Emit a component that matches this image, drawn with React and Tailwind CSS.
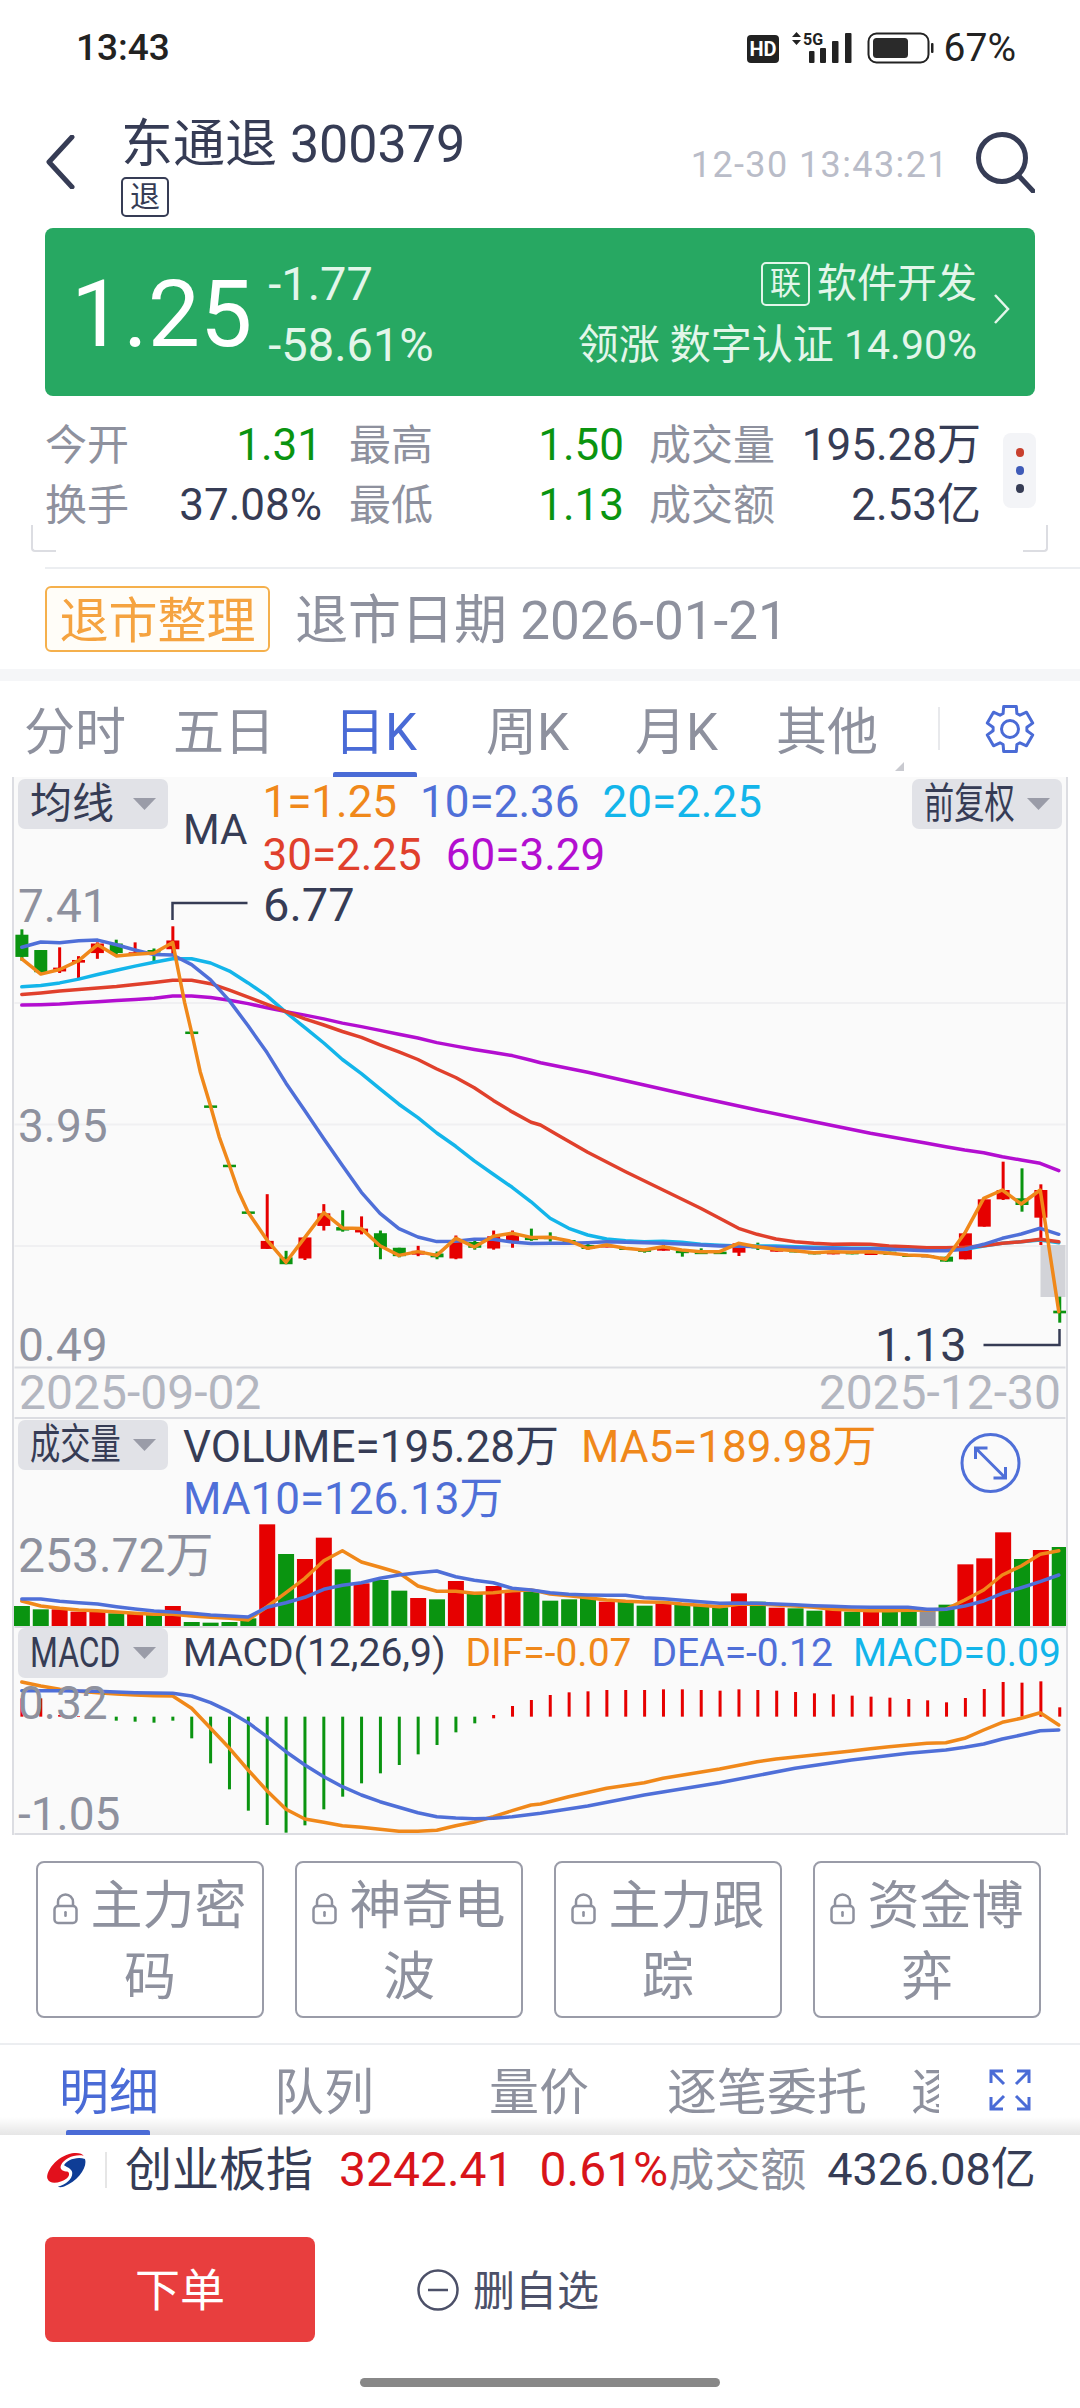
import React from 'react';

const X = (i) => 21.4 + 18.87 * i;
const a = (px, py) => [px / 2.904, 800 + py / 2.613]; // upper-left chart scale
const b = (px, py) => [540 + px / 2.904, 1000 + py / 3]; // right chart scale
const c = (px, py) => [px / 2.904, 1400 + py / 3];
const d = (px, py) => [540 + px / 2.904, 1400 + py / 3];
const pts = (list, fn) => {
  const out = [];
  for (let i = 0; i < list.length; i += 2) out.push(fn(list[i], list[i + 1]));
  return out;
};
const line = (l1, f1, l2, f2) =>
  [...pts(l1, f1), ...(l2 ? pts(l2, f2) : [])].map((p) => p[0].toFixed(1) + ',' + p[1].toFixed(1)).join(' ');

const R = '#e60000';
const G = '#0a9410';
const GR = '#8e919e';

// i, colour, bodyTop, bodyBottom, wickTop, wickBottom
const candlesA = [
  [0, G, 352, 410, 338, 420], [1, G, 392, 450, 392, 455], [2, R, 438, 448, 385, 452], [3, R, 418, 425, 408, 465],
  [4, R, 375, 400, 372, 415], [5, G, 375, 400, 365, 408], [6, R, 398, 403, 372, 405], [7, G, 392, 397, 388, 422],
  [8, R, 367, 390, 330, 405], [9, G, 605, 610, 605, 610], [10, G, 798, 803, 798, 803], [11, G, 953, 958, 953, 958],
  [12, G, 1075, 1080, 1075, 1080], [13, R, 1152, 1173, 1030, 1173], [14, G, 1195, 1213, 1178, 1213], [15, R, 1143, 1198, 1143, 1202],
  [16, R, 1080, 1113, 1056, 1125], [17, G, 1116, 1125, 1072, 1128], [18, R, 1120, 1130, 1088, 1135], [19, G, 1132, 1168, 1125, 1200],
  [20, G, 1170, 1192, 1170, 1195], [21, R, 1178, 1188, 1165, 1192], [22, G, 1185, 1195, 1180, 1200], [23, R, 1150, 1198, 1138, 1200],
  [24, G, 1155, 1170, 1150, 1175], [25, R, 1140, 1172, 1125, 1175], [26, R, 1135, 1155, 1125, 1170], [27, G, 1140, 1150, 1120, 1152],
];
const candlesB = [
  [28, G, 710, 716, 697, 725], [29, G, 720, 724, 720, 724], [30, G, 735, 747, 730, 750], [31, R, 735, 742, 735, 742],
  [32, G, 742, 750, 742, 750], [33, G, 748, 755, 748, 758], [34, R, 740, 752, 733, 752], [35, G, 752, 757, 748, 770],
  [36, G, 755, 760, 745, 762], [37, G, 755, 762, 755, 762], [38, R, 730, 758, 728, 768], [39, G, 735, 745, 728, 750],
  [40, R, 745, 755, 745, 755], [41, G, 750, 757, 750, 757], [42, G, 755, 763, 755, 763], [43, R, 755, 763, 755, 763],
  [44, G, 755, 763, 755, 763], [45, R, 755, 765, 755, 765], [46, G, 755, 765, 755, 765], [47, G, 763, 771, 763, 771],
  [48, GR, 765, 773, 765, 773], [49, G, 770, 785, 770, 785], [50, R, 700, 778, 700, 778], [51, R, 598, 680, 598, 680],
  [52, R, 570, 598, 485, 600], [53, G, 595, 615, 505, 635], [54, R, 570, 653, 553, 735], [55, G, 932, 940, 890, 968],
];

const volTops = [
  [G, 618], [G, 628], [R, 628], [R, 635], [R, 635], [G, 640], [R, 640], [G, 645], [R, 618], [G, 666], [G, 668], [G, 666], [G, 655], [R, 373],
  [G, 462], [R, 477], [R, 413], [G, 508], [R, 550], [G, 540], [G, 572], [R, 594], [G, 598], [R, 543], [G, 580], [R, 558], [R, 570], [G, 575],
  [G, 602], [G, 598], [G, 594], [R, 605], [G, 605], [G, 617], [R, 610], [G, 615], [G, 618], [G, 622], [R, 580], [G, 605], [R, 623], [G, 625],
  [G, 632], [R, 628], [G, 635], [R, 635], [G, 632], [G, 635], [GR, 630], [G, 614], [R, 493], [R, 475], [R, 397], [G, 477], [R, 450], [G, 441],
];

// top/bottom of the MACD histogram, in the zoom scale (zero at 950)
const macdBars = [
  [R, 895, 950], [R, 895, 950], [R, 945, 950], [R, 948, 950], [G, 950, 955], [G, 950, 962], [G, 950, 965], [G, 950, 968], [G, 950, 962],
  [G, 950, 1015], [G, 950, 1090], [G, 950, 1168], [G, 950, 1232], [G, 950, 1275], [G, 950, 1298], [G, 950, 1276], [G, 950, 1228], [G, 950, 1190],
  [G, 950, 1150], [G, 950, 1120], [G, 950, 1095], [G, 950, 1063], [G, 950, 1035], [G, 950, 997], [G, 950, 970], [R, 945, 955], [R, 918, 950], [R, 900, 950],
  ...[885, 877, 874, 870, 870, 870, 868, 868, 870, 872, 868, 870, 872, 876, 880, 883, 887, 890, 893, 897, 901, 907, 894, 867, 846, 848, 844, 922].map((t) => [R, t, 950]),
];

const ma1 = line(
  [62,415,117,455,172,443,227,420,282,378,337,408,391,403,446,400,500,372,515,440,535,530,555,607,580,710,610,800,635,880,665,955,690,1020,719,1077,774,1150,829,1208,884,1143,939,1078,993,1118,1048,1120,1102,1165,1157,1190,1212,1180,1267,1190,1322,1145,1376,1168,1431,1140,1486,1132,1541,1143], a,
  [28,712,82,722,137,745,192,735,247,745,301,750,356,740,410,750,465,755,520,755,575,730,629,740,684,748,739,752,794,758,848,755,903,757,958,755,1012,760,1067,765,1122,767,1177,778,1232,700,1287,595,1341,570,1396,612,1451,570,1505,935], b);
const ma10 = line(
  [62,385,117,371,172,373,227,368,282,366,337,378,391,392,446,404,500,405,555,430,610,470,665,525,719,590,774,660,829,740,884,812,939,885,993,955,1048,1025,1102,1080,1157,1120,1212,1142,1267,1154,1322,1153,1376,1148,1431,1148,1486,1155,1541,1159], a,
  [28,730,82,730,137,728,192,725,247,727,301,728,356,730,410,732,465,735,520,738,575,738,629,740,684,742,739,743,794,745,848,745,903,746,958,746,1012,748,1067,750,1122,752,1177,752,1232,748,1287,733,1341,715,1396,702,1451,685,1505,703], b);
const ma20 = line(
  [62,488,117,485,172,478,227,468,282,456,337,445,391,434,446,424,500,415,555,415,610,426,665,447,719,478,774,512,829,555,884,595,939,635,993,678,1048,715,1102,755,1157,795,1212,830,1267,870,1322,905,1376,943,1431,978,1486,1012,1541,1050], a,
  [0,630,28,655,82,685,137,705,192,717,247,722,301,725,356,724,410,727,465,733,520,736,575,738,629,738,684,738,739,740,794,742,848,743,903,745,958,745,1012,745,1067,745,1122,745,1177,748,1232,748,1287,738,1341,730,1396,725,1451,720,1505,728], b);
const ma30 = line(
  [62,508,117,504,172,499,227,495,282,491,337,487,391,482,446,477,500,471,555,471,610,480,665,497,719,515,774,534,829,553,884,572,939,588,993,605,1048,620,1102,640,1157,658,1212,678,1267,703,1322,725,1376,752,1431,785,1486,815,1541,842], a,
  [0,375,55,408,137,457,247,515,356,570,465,625,520,655,575,685,629,703,684,717,739,725,794,730,848,733,903,732,958,733,1012,738,1067,740,1122,743,1177,743,1232,742,1287,737,1341,730,1396,725,1451,718,1505,725], b);
const ma60 = line(
  [62,536,117,535,172,533,227,530,282,527,337,524,391,521,446,518,500,512,555,512,610,516,665,523,719,532,774,543,829,553,884,562,939,572,993,583,1048,592,1102,602,1157,612,1212,622,1267,634,1322,643,1376,652,1431,660,1486,668,1541,680], a,
  [0,188,137,217,301,255,465,293,629,330,794,365,958,400,1122,430,1177,440,1232,450,1287,458,1341,470,1396,480,1451,490,1505,512], b);

const volMa5 = line(
  [62,603,117,618,172,625,227,630,282,632,337,636,391,640,446,643,500,643,555,648,610,652,665,655,719,660,774,620,829,578,884,535,939,482,993,452,1048,486,1102,502,1157,518,1212,558,1267,574,1322,574,1376,580,1431,578,1486,572,1541,570], c,
  [0,575,28,582,82,587,137,593,192,600,247,604,301,606,356,607,410,612,465,616,520,620,575,613,629,612,684,615,739,618,794,622,848,628,903,630,958,632,1012,632,1067,631,1122,630,1177,628,1232,600,1287,570,1341,525,1396,498,1451,463,1505,452], d);
const volMa10 = line(
  [62,597,117,597,172,604,227,608,282,612,337,620,391,627,446,633,500,636,555,640,610,645,665,648,719,651,774,622,829,608,884,592,939,568,993,556,1048,548,1102,535,1157,525,1212,518,1267,513,1322,530,1376,541,1431,548,1486,565,1541,570], c,
  [28,578,82,583,137,585,192,586,247,586,301,593,356,596,410,601,465,605,520,610,575,609,629,610,684,612,739,614,794,617,848,619,903,621,958,622,1012,622,1067,622,1122,628,1177,628,1232,618,1287,603,1341,580,1396,563,1451,545,1505,525], d);
const dif = line(
  [62,846,117,858,172,868,227,874,282,878,337,882,391,885,446,887,500,888,555,925,610,985,665,1045,719,1110,774,1172,829,1228,884,1257,939,1267,993,1277,1048,1282,1102,1288,1157,1294,1212,1294,1267,1291,1322,1277,1376,1266,1431,1250,1486,1232,1541,1215], c,
  [0,1212,82,1190,192,1165,301,1148,356,1135,520,1107,629,1085,684,1077,794,1065,903,1053,958,1046,1012,1040,1122,1030,1177,1028,1232,1015,1287,990,1341,967,1396,955,1451,938,1505,975], d);
const dea = line(
  [62,872,172,872,282,874,391,878,500,880,555,888,610,908,665,935,719,968,774,1010,829,1055,884,1095,939,1130,993,1160,1048,1185,1102,1205,1157,1222,1212,1238,1267,1250,1322,1254,1376,1256,1431,1255,1486,1250], c,
  [0,1240,137,1218,301,1185,520,1148,739,1105,903,1080,1067,1060,1177,1050,1232,1042,1287,1032,1341,1017,1396,1005,1451,992,1505,990], d);

const Candle = ({ data, map }) => {
  const [i, col, t, bt, wt, wb] = data;
  const x = X(i);
  const by1 = map(0, t)[1];
  const by2 = map(0, bt)[1];
  const wy1 = map(0, wt)[1];
  const wy2 = map(0, wb)[1];
  return (
    <g fill={col}>
      <rect x={x - 1.5} y={wy1} width="3" height={wy2 - wy1} />
      <rect x={x - 6.5} y={by1} width="13" height={Math.max(by2 - by1, 2.5)} />
    </g>
  );
};

const Poly = ({ p, color, w = 3.5 }) => (
  <polyline points={p} fill="none" stroke={color} strokeWidth={w} strokeLinejoin="round" strokeLinecap="round" />
);

const ChartDrawing = () => (
  <svg viewBox="14 777 1051 1058" className="absolute inset-0 w-full h-full">
    {[1003, 1124.5, 1246].map((y) => (
      <line key={y} x1="14" x2="1065" y1={y} y2={y} stroke="#f0f0f2" strokeWidth="2" />
    ))}
    {[1367.5, 1418, 1627, 1834].map((y) => (
      <line key={y} x1="14" x2="1065" y1={y} y2={y} stroke="#dcdde2" strokeWidth="2" />
    ))}
    <rect x="1040" y="1245" width="25" height="52" fill="#d2d3d8" />
    {candlesA.map((k) => <Candle key={k[0]} data={k} map={a} />)}
    {candlesB.map((k) => <Candle key={k[0]} data={k} map={b} />)}
    <Poly p={ma60} color="#b30ed0" />
    <Poly p={ma20} color="#13b5ea" />
    <Poly p={ma30} color="#e0402c" />
    <Poly p={ma10} color="#4f6fd8" />
    <Poly p={ma1} color="#f0881a" />
    <path d="M172 920V903H247" fill="none" stroke="#363c55" strokeWidth="2.5" />
    <path d="M983 1345H1059V1329" fill="none" stroke="#363c55" strokeWidth="2.5" />

    {volTops.map(([col, t], i) => (
      <rect key={i} x={X(i) - 8} y={1400 + t / 3} width="16" height={226 - t / 3} fill={col} />
    ))}
    <Poly p={volMa5} color="#f0881a" />
    <Poly p={volMa10} color="#4f6fd8" />
    <circle cx="990" cy="1463" r="28.5" fill="none" stroke="#4f6fd8" strokeWidth="3" />
    <path d="M975 1448L1005 1478M975 1459V1448H987M1005 1467V1478H993" fill="none" stroke="#4f6fd8" strokeWidth="3" />

    {macdBars.map(([col, t, bt], i) => (
      <rect key={i} x={X(i) - 1.5} y={1400 + t / 3} width="3" height={(bt - t) / 3} fill={col} />
    ))}
    <Poly p={dif} color="#f0881a" />
    <Poly p={dea} color="#4f6fd8" />
  </svg>
);

const gearPath = (() => {
  const parts = [];
  for (let k = 0; k < 6; k++) {
    const t = (-90 + k * 60) * (Math.PI / 180);
    const at = (r, off) => {
      const q = t + off;
      return (25 + r * Math.cos(q)).toFixed(1) + ' ' + (25 + r * Math.sin(q)).toFixed(1);
    };
    parts.push(k === 0 ? 'M' + at(17, -0.42) : 'L' + at(17, -0.42));
    parts.push('L' + at(23.5, -0.27));
    parts.push('L' + at(23.5, 0.27));
    parts.push('L' + at(17, 0.42));
  }
  return parts.join(' ') + 'Z';
})();

const Drop = ({ children }) => (
  <div className="w-[150px] h-[50px] rounded-[7px] bg-[#e1e2e7] flex items-center pl-[12px] text-[42px] leading-none text-[#363c55] shrink-0">
    <div className="w-[90px] whitespace-nowrap">{children}</div>
    <svg width="23" height="12" viewBox="0 0 23 12" className="ml-[13px] shrink-0"><path d="M0 0H23L11.500 12Z" fill="#9a9ca8" /></svg>
  </div>
);

const Lock = () => (
  <svg width="25" height="32" viewBox="0 0 25 32" className="inline-block mr-[12px] align-[-1px]">
    <path d="M5 13V9a7.5 7.5 0 0 1 15 0v4" fill="none" stroke="#8e919e" strokeWidth="2.5" />
    <rect x="1.5" y="13" width="22" height="17" rx="3.5" fill="none" stroke="#8e919e" strokeWidth="2.5" />
    <rect x="11.2" y="18" width="2.6" height="6" rx="1.3" fill="#8e919e" />
  </svg>
);

const LockBtn = ({ text }) => (
  <div className="w-[228px] h-[157px] pt-[4px] rounded-[8px] border-2 border-[#9a9ca8] flex items-center justify-center text-center text-[52px] leading-[71px] text-[#8e919e]">
    <div><Lock />{text}</div>
  </div>
);

const Stat = ({ label, value, color, w }) => (
  <div className={`${w} flex justify-between items-center text-[44px]`}>
    <span className="text-[42px] text-[#8e919e]">{label}</span>
    <span className={color}>{value}</span>
  </div>
);

export default function App() {
  return (
    <div className="w-[1080px] h-[2408px] overflow-hidden bg-white font-['Roboto','Noto_Sans_CJK_SC',sans-serif]">
      {/* status bar */}
      <div className="h-[96px] flex items-center justify-between pl-[76px] pr-[64px] text-[#222]">
        <span className="text-[37px] font-medium">13:43</span>
        <div className="flex items-center">
          <svg width="187" height="34" viewBox="750 31 187 34">
            <rect x="750" y="35" width="32" height="28" rx="4" fill="#222" />
            <text x="766" y="56" textAnchor="middle" fontSize="20" fontWeight="700" fill="#fff" fontFamily="Roboto">HD</text>
            <path d="M799.500 32L804 37H795ZM799.500 45L804 40H795Z" fill="#222" />
            <text x="806" y="45" fontSize="16" fontWeight="700" fill="#222" fontFamily="Roboto">5G</text>
            <rect x="812" y="51" width="5.500" height="12" rx="1" fill="#222" />
            <rect x="823" y="48" width="6" height="15" rx="1" fill="#222" />
            <rect x="835" y="41" width="6.500" height="22" rx="1" fill="#222" />
            <rect x="848" y="33" width="6.500" height="30" rx="1" fill="#222" />
            <rect x="871.500" y="33.500" width="60" height="29" rx="8" fill="none" stroke="#222" strokeWidth="2" />
            <rect x="876" y="38" width="35" height="20" rx="3.500" fill="#2a2a2a" />
            <rect x="934" y="43" width="2.500" height="10" rx="1" fill="#222" />
          </svg>
          <span className="ml-[10px] text-[39px] leading-none">67%</span>
        </div>
      </div>

      {/* title */}
      <div className="h-[132px] flex pl-[45px] pr-[45px] text-[#363c55]">
        <svg width="30" height="54" viewBox="0 0 30 54" className="mt-[39px] shrink-0">
          <path d="M27 2L4 27L27 52" fill="none" stroke="#363c55" strokeWidth="5" strokeLinecap="round" strokeLinejoin="round" />
        </svg>
        <div className="ml-[46px] pt-[21px]">
          <div className="text-[52px] leading-[56px] whitespace-nowrap">东通退 300379</div>
          <div className="mt-[4px] w-[48px] h-[40px] rounded-[5px] border-2 border-[#363c55] flex items-center justify-center text-[30px] leading-none">退</div>
        </div>
        <div className="flex-1" />
        <span className="self-start mt-[50px] text-[36px] leading-[38px] tracking-[1.4px] text-[#b9bcc8] whitespace-nowrap">12-30 13:43:21</span>
        <svg width="60" height="62" viewBox="0 0 60 62" className="ml-[26px] mt-[35px] shrink-0">
          <circle cx="27" cy="27" r="23.500" fill="none" stroke="#363c55" strokeWidth="5" />
          <path d="M43 44L58 60" stroke="#363c55" strokeWidth="5" strokeLinecap="round" />
        </svg>
      </div>

      {/* price card */}
      <div className="mx-[45px] h-[168px] rounded-[8px] bg-[#27a862] flex items-center pl-[26px] pr-[24px] text-white">
        <span className="text-[93px] leading-none mt-[4px]">1.25</span>
        <div className="ml-[16px] flex flex-col text-[47px] leading-[61px] text-[#e3f6ea] mt-[3px]">
          <span>-1.77</span>
          <span>-58.61%</span>
        </div>
        <div className="flex-1 flex flex-col items-end mt-[4px] text-[#e3f6ea]">
          <div className="flex items-center h-[46px]">
            <span className="w-[49px] h-[44px] rounded-[5px] border-2 border-[#e3f6ea] flex items-center justify-center text-[31px]">联</span>
            <span className="ml-[7px] text-[40px]">软件开发</span>
          </div>
          <div className="mt-[16px] text-[41px] leading-[44px] whitespace-nowrap">领涨 数字认证 14.90%</div>
        </div>
        <svg width="18" height="32" viewBox="0 0 18 32" className="ml-[16px] -mt-[6px] shrink-0">
          <path d="M2 2L15 16L2 30" fill="none" stroke="#e3f6ea" strokeWidth="2.500" />
        </svg>
      </div>

      {/* stats */}
      <div className="relative h-[171px] pt-[19px] pl-[45px] flex">
        <div>
          <div className="h-[60px] flex items-center">
            <Stat label="今开" value="1.31" color="text-[#0a9410]" w="w-[277px]" />
            <div className="ml-[27px]"><Stat label="最高" value="1.50" color="text-[#0a9410]" w="w-[275px]" /></div>
            <div className="ml-[25px]"><Stat label="成交量" value="195.28万" color="text-[#363c55]" w="w-[332px]" /></div>
          </div>
          <div className="h-[60px] flex items-center">
            <Stat label="换手" value="37.08%" color="text-[#363c55]" w="w-[277px]" />
            <div className="ml-[27px]"><Stat label="最低" value="1.13" color="text-[#0a9410]" w="w-[275px]" /></div>
            <div className="ml-[25px]"><Stat label="成交额" value="2.53亿" color="text-[#363c55]" w="w-[332px]" /></div>
          </div>
        </div>
        <div className="ml-[22px] mt-[18px] w-[33px] h-[75px] rounded-[8px] bg-[#f3f4f7] flex flex-col items-center justify-center gap-[9px]">
          <span className="w-[8px] h-[9px] rounded-full bg-[#c8402e]" />
          <span className="w-[8px] h-[9px] rounded-full bg-[#3f5bb8]" />
          <span className="w-[8px] h-[9px] rounded-full bg-[#363c55]" />
        </div>
        <div className="absolute left-[31px] top-[129px] w-[25px] h-[27px] border-l-2 border-b-2 border-[#dcdde2] rounded-bl-[4px]" />
        <div className="absolute left-[1023px] top-[129px] w-[25px] h-[27px] border-r-2 border-b-2 border-[#dcdde2] rounded-br-[4px]" />
      </div>
      <div className="ml-[45px] h-[2px] bg-[#eceef1]" />

      {/* delisting */}
      <div className="h-[100px] flex items-center pl-[45px]">
        <span className="w-[225px] h-[66px] pt-[5px] rounded-[6px] border-2 border-[#f5b04c] bg-[#fffdf8] flex items-center justify-center text-[49px] leading-none text-[#f5a340] whitespace-nowrap">退市整理</span>
        <span className="ml-[25px] mt-[6px] text-[53px] text-[#8e919e] whitespace-nowrap">退市日期 2026-01-21</span>
      </div>
      <div className="h-[12px] bg-[#f5f6f8]" />

      {/* period tabs */}
      <div className="relative h-[96px] pt-[8px] flex items-center pl-[24px] text-[51px] text-[#8e919e] whitespace-nowrap">
        <span>分时</span>
        <span className="ml-[47px]">五日</span>
        <span className="ml-[59px] text-[#4a6bd6]">日K</span>
        <span className="ml-[69px]">周K</span>
        <span className="ml-[66px]">月K</span>
        <span className="ml-[58px]">其他</span>
        <span className="ml-[60px] w-[2px] h-[43px] -mt-[10px] bg-[#e8e9ec]" />
        <svg width="50" height="50" viewBox="0 0 50 50" className="ml-[45px] -mt-[8px] shrink-0">
          <path d={gearPath} fill="none" stroke="#4a6bd6" strokeWidth="3" strokeLinejoin="round" />
          <circle cx="25" cy="25" r="8.500" fill="none" stroke="#4a6bd6" strokeWidth="3" />
        </svg>
        <span className="absolute left-[333px] bottom-0 w-[84px] h-[5px] rounded-t-[2px] bg-[#4a6bd6]" />
        <svg width="9" height="9" viewBox="0 0 9 9" className="absolute left-[895px] top-[81px]"><path d="M9 0V9H0Z" fill="#c9cad0" /></svg>
      </div>

      {/* chart */}
      <div className="relative mx-[12px] h-[1058px] bg-[#fafafa] border-x-2 border-[#dcdde2]">
        <ChartDrawing />
        <div className="relative h-[590px]">
          <div className="flex pl-[4px] pr-[4px] pt-[2px] text-[44px] leading-[53px] whitespace-nowrap">
            <Drop>均线</Drop>
            <span className="ml-[15px] mt-[24px] text-[#363c55] text-[42px]">MA</span>
            <div className="ml-[15px] -mt-[3px]">
              <div className="flex gap-[23px]">
                <span className="text-[#f0881a]">1=1.25</span>
                <span className="text-[#4f6fd8]">10=2.36</span>
                <span className="text-[#13b5ea]">20=2.25</span>
              </div>
              <div className="flex gap-[24px]">
                <span className="text-[#e0402c]">30=2.25</span>
                <span className="text-[#b30ed0]">60=3.29</span>
              </div>
            </div>
            <div className="flex-1" />
            <Drop><span className="inline-block origin-left scale-x-[0.72]">前复权</span></Drop>
          </div>
          <span className="absolute left-[4px] top-[102px] text-[46px] leading-[54px] text-[#8e919e]">7.41</span>
          <span className="absolute left-[4px] top-[322px] text-[46px] leading-[54px] text-[#8e919e]">3.95</span>
          <span className="absolute left-[4px] top-[541px] text-[46px] leading-[54px] text-[#8e919e]">0.49</span>
          <span className="absolute left-[249px] top-[101px] text-[47px] leading-[54px] text-[#363c55]">6.77</span>
          <span className="absolute left-[861px] top-[541px] text-[47px] leading-[54px] text-[#363c55]">1.13</span>
        </div>
        <div className="relative h-[51px] flex items-center justify-between pl-[5px] pr-[5px] text-[48px] text-[#b3b6c0] leading-none">
          <span>2025-09-02</span>
          <span>2025-12-30</span>
        </div>
        <div className="relative h-[209px]">
          <div className="flex pl-[4px] pt-[2px] text-[44px] leading-[52px] whitespace-nowrap">
            <Drop><span className="inline-block origin-left scale-x-[0.72]">成交量</span></Drop>
            <div className="ml-[15px] mt-[1px]">
              <div className="flex">
                <span className="text-[#363c55]">VOLUME=195.28万</span>
                <span className="ml-[22px] text-[#f0881a]">MA5=189.98万</span>
              </div>
              <div className="text-[#4f6fd8]">MA10=126.13万</div>
            </div>
          </div>
          <span className="absolute left-[4px] top-[111px] text-[48px] leading-[54px] text-[#8e919e]">253.72万</span>
        </div>
        <div className="relative h-[208px]">
          <div className="flex pl-[4px] pt-[1px] text-[39px] leading-[50px] whitespace-nowrap">
            <Drop><span className="inline-block origin-left scale-x-[0.76]">MACD</span></Drop>
            <span className="ml-[15px] text-[#363c55]">MACD(12,26,9)</span>
            <span className="ml-[20px] text-[#f0881a]">DIF=-0.07</span>
            <span className="ml-[20px] text-[#4f6fd8]">DEA=-0.12</span>
            <span className="ml-[20px] text-[#13b5ea]">MACD=0.09</span>
          </div>
          <span className="absolute left-[4px] top-[49px] text-[46px] leading-[54px] text-[#8e919e]">0.32</span>
          <span className="absolute left-[4px] top-[160px] text-[46px] leading-[54px] text-[#8e919e]">-1.05</span>
        </div>
      </div>

      {/* locked tools */}
      <div className="flex gap-[31px] pl-[36px] pt-[26px]">
        <LockBtn text="主力密码" />
        <LockBtn text="神奇电波" />
        <LockBtn text="主力跟踪" />
        <LockBtn text="资金博弈" />
      </div>
      <div className="mt-[25px] h-[2px] bg-[#eceef1]" />

      {/* detail tabs */}
      <div className="relative h-[90px] flex items-center pl-[59px] text-[50px] text-[#8e919e] whitespace-nowrap">
        <div className="absolute left-0 right-0 bottom-0 h-[18px] bg-gradient-to-b from-transparent to-black/10" />
        <span className="text-[#4a6bd6] mt-[6px]">明细</span>
        <span className="ml-[115px] mt-[6px]">队列</span>
        <span className="ml-[115px] mt-[6px]">量价</span>
        <span className="ml-[78px] mt-[6px]">逐笔委托</span>
        <span className="ml-[44px] w-[28px] overflow-hidden mt-[6px]">逐笔</span>
        <svg width="42" height="42" viewBox="0 0 42 42" className="ml-[50px] shrink-0">
          <path d="M2 2L15 15M2 14V2H14M40 2L27 15M28 2H40V14M2 40L15 27M2 28V40H14M40 40L27 27M40 28V40H28" fill="none" stroke="#4a6bd6" strokeWidth="3" />
        </svg>
        <div className="absolute left-[66px] bottom-0 w-[84px] h-[5px] rounded-t-[2px] bg-[#4a6bd6]" />
      </div>

      {/* index ticker */}
      <div className="h-[70px] flex items-center pl-[45px] text-[48px] whitespace-nowrap">
        <svg width="42" height="36" viewBox="42 38 128 114" className="shrink-0">
          <path d="M47 122C42 100 75 52 125 42C145 39 158 43 162 50C135 44 100 58 90 80C84 95 100 100 110 100C118 102 118 115 108 122C90 135 55 145 47 122Z" fill="#e2101c" />
          <path d="M166 60C175 85 145 130 100 147C92 150 85 150 80 148C110 140 130 120 125 100C120 88 105 85 100 80C105 65 140 50 166 60Z" fill="#0f3d96" />
        </svg>
        <span className="ml-[18px] w-[2px] h-[36px] bg-[#e6e6e6]" />
        <span className="ml-[18px] text-[47px] text-[#363c55]">创业板指</span>
        <span className="ml-[26px] text-[#d8141a]">3242.41</span>
        <span className="ml-[26px] text-[#d8141a]">0.61%</span>
        <span className="text-[46px] text-[#8e919e]">成交额</span>
        <span className="ml-[21px] text-[45px] text-[#363c55]">4326.08亿</span>
      </div>

      {/* actions */}
      <div className="mt-[32px] flex items-center pl-[45px]">
        <div className="w-[270px] h-[105px] pt-[4px] rounded-[8px] bg-[#e83e3e] flex items-center justify-center text-[45px] text-white">下单</div>
        <svg width="42" height="42" viewBox="0 0 42 42" className="ml-[102px] shrink-0">
          <circle cx="21" cy="21" r="19.500" fill="none" stroke="#4c5068" strokeWidth="2.500" />
          <path d="M11 21H31" stroke="#4c5068" strokeWidth="2.500" />
        </svg>
        <span className="ml-[14px] pt-[4px] text-[42px] text-[#4c5068]">删自选</span>
      </div>

      <div className="mt-[36px] ml-[360px] w-[360px] h-[9px] rounded-full bg-[#888888]" />
    </div>
  );
}
